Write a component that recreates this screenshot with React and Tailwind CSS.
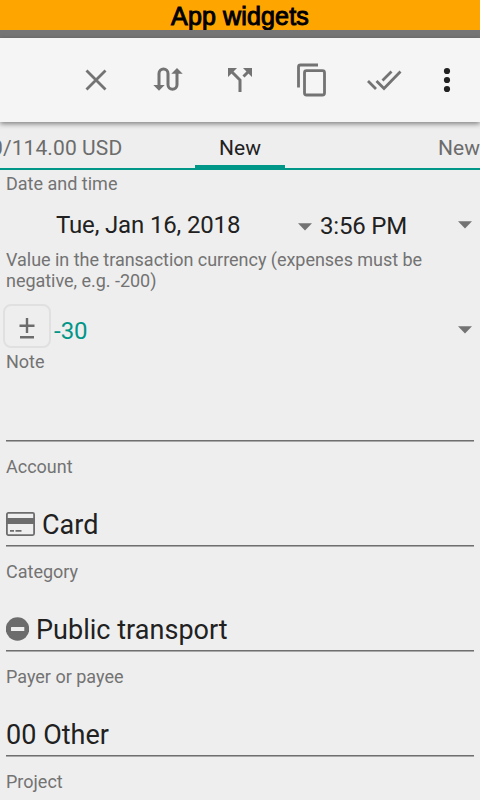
import React from "react";

function Label({ children, className = "" }) {
  return <div className={`shrink-0 text-[18px] leading-[21px] text-[#737373] ${className}`}>{children}</div>;
}

function Caret() {
  return (
    <svg className="h-[8px] w-[14px] shrink-0" viewBox="0 0 14 8" fill="#737373">
      <path d="M0 0.3h14L7 7.6z" />
    </svg>
  );
}

function Underline() {
  return (
    <div className="shrink-0">
      <div className="h-px bg-[#6f6f6f]" />
      <div className="h-px bg-[#a9a9a9]" />
    </div>
  );
}

function Field({ label, icon, value }) {
  return (
    <div className="flex shrink-0 flex-col pt-[14px]">
      <Label>{label}</Label>
      <div className="flex h-[68px] items-end pb-[4px]">
        {icon}
        <span className="text-[27px] leading-[32px] tracking-[0.03px] text-[#212121]">{value}</span>
      </div>
      <Underline />
    </div>
  );
}

const cardIcon = (
  <svg className="mr-[7px] mb-[5px] h-[24px] w-[29px]" viewBox="0 0 29 24" fill="none">
    <rect x="0.9" y="0.9" width="27.2" height="22.2" rx="1.5" stroke="#6c6c6c" strokeWidth="1.8" />
    <rect x="1" y="6" width="27" height="6" fill="#6c6c6c" />
    <path d="M4 18.8h4M9.500 18.800h6" stroke="#6c6c6c" strokeWidth="1.8" />
  </svg>
);

const minusIcon = (
  <svg className="mr-[7px] mb-[5px] h-[24px] w-[23px]" viewBox="0 0 23 24">
    <circle cx="11.500" cy="12" r="11.700" fill="#6c6c6c" />
    <rect x="5" y="10" width="13.300" height="4" rx="0.500" fill="#eeeeee" />
  </svg>
);

export default function App() {
  return (
    <div className="flex h-[800px] w-[480px] flex-col overflow-hidden bg-[#eeeeee] font-[Roboto,sans-serif]">
      <div className="h-[30px] shrink-0 bg-[#ffa500] text-center font-['Liberation_Sans',Arial,sans-serif] text-[25px] leading-[33px] tracking-[0.15px] text-black [-webkit-text-stroke:1px_black]">
        App widgets
      </div>
      <div className="h-[8px] shrink-0 bg-[#757575]" />

      <header className="z-10 flex h-[84px] shrink-0 items-center bg-[#f5f5f5] pl-[60px] shadow-[0_2px_5px_rgba(0,0,0,0.45)]">
        <svg className="h-[72px] w-[72px]" viewBox="0 0 72 72" fill="none" stroke="#737373" strokeWidth="2.8">
          <path d="M26.500 26.500l19 19M45.500 26.500l-19 19" />
        </svg>
        <svg className="h-[72px] w-[72px]" viewBox="0 0 72 72" fill="none" stroke="#737373" strokeWidth="3">
          <path d="M27 42V29.500a4.500 4.500 0 0 1 9 0v11.200a4.500 4.500 0 0 0 9 0V29" />
          <path d="M21.300 41h11.400l-5.700 5.700zM39.300 29.700h11.400L45 24z" fill="#737373" stroke="none" />
        </svg>
        <svg className="h-[72px] w-[72px]" viewBox="0 0 72 72" fill="none" stroke="#737373" strokeWidth="3">
          <path d="M24 24h9l-9 9zM48 24v9l-9-9z" fill="#737373" stroke="none" />
          <path d="M27 27l9 9V48M45 27l-5.500 5.500" />
        </svg>
        <svg className="h-[72px] w-[72px]" viewBox="0 0 72 72" fill="none" stroke="#737373" strokeWidth="2.8">
          <path d="M42 21H24.500a2 2 0 0 0-2 2v20.500" />
          <rect x="28.500" y="26.700" width="20" height="24.300" rx="2" />
        </svg>
        <svg className="h-[72px] w-[72px]" viewBox="0 0 72 72" fill="none" stroke="#737373" strokeWidth="2.8">
          <path d="M20 37l8 8M28.500 37l7.500 7.500L52.500 27.500M34.500 36.500l9-9" />
        </svg>
        <svg className="ml-[21px] h-[26px] w-[12px]" viewBox="0 0 12 26" fill="#212121">
          <circle cx="6" cy="4" r="3.100" />
          <circle cx="6" cy="13" r="3.100" />
          <circle cx="6" cy="22" r="3.100" />
        </svg>
      </header>

      <nav className="flex h-[48px] shrink-0 justify-between border-b-2 border-[#009688] text-[21px] leading-[53px] text-[#6c6c6c]">
        <div className="flex w-[195px] justify-start">
          <span className="ml-[-9px] whitespace-nowrap tracking-[0.1px]">0/114.00 USD</span>
        </div>
        <div className="flex h-[46px] w-[90px] flex-col justify-between text-center text-[#212121]">
          <div className="h-[43px]">New</div>
          <div className="h-[3px] bg-[#009688]" />
        </div>
        <div className="flex w-[195px] justify-end">
          <span>New</span>
        </div>
      </nav>

      <main className="flex flex-col px-[6px] pt-[3px]">
        <Label>Date and time</Label>
        <div className="flex h-[55px] shrink-0 items-center text-[24px] leading-[28px] text-[#212121]">
          <div className="flex w-[306px] items-center justify-between">
            <span className="pt-[7px] pl-[50px] tracking-[-0.16px]">Tue, Jan 16, 2018</span>
            <div className="pt-[10px]"><Caret /></div>
          </div>
          <div className="flex flex-1 items-center justify-between pl-[8px] pr-[2px]">
            <span className="pt-[9px] tracking-[-0.2px]">3:56 PM</span>
            <div className="pt-[6px]"><Caret /></div>
          </div>
        </div>
        <Label className="tracking-[-0.03px]">Value in the transaction currency (expenses must be negative, e.g. -200)</Label>
        <div className="flex h-[60px] shrink-0 items-center pt-[10px] pr-[2px]">
          <div className="ml-[-3px] flex h-[44px] w-[48px] items-center justify-center rounded-[8px] border-2 border-[#e0e0e0]">
            <svg className="mt-[3px] h-[22px] w-[16px]" viewBox="0 0 16 22" fill="none" stroke="#6c6c6c" strokeWidth="2.400">
              <path d="M8 1v15M0.500 8.700h15M1 20.200h14" />
            </svg>
          </div>
          <span className="flex-1 pt-[10px] pl-[3px] text-[24px] leading-[28px] text-[#009688]">-30</span>
          <div className="pt-[7px]"><Caret /></div>
        </div>
        <Label>Note</Label>
        <div className="h-[68px] shrink-0" />
        <Underline />
        <Field label="Account" icon={cardIcon} value="Card" />
        <Field label="Category" icon={minusIcon} value="Public transport" />
        <Field label="Payer or payee" value="00 Other" />
        <div className="pt-[14px]">
          <Label>Project</Label>
        </div>
      </main>
    </div>
  );
}
